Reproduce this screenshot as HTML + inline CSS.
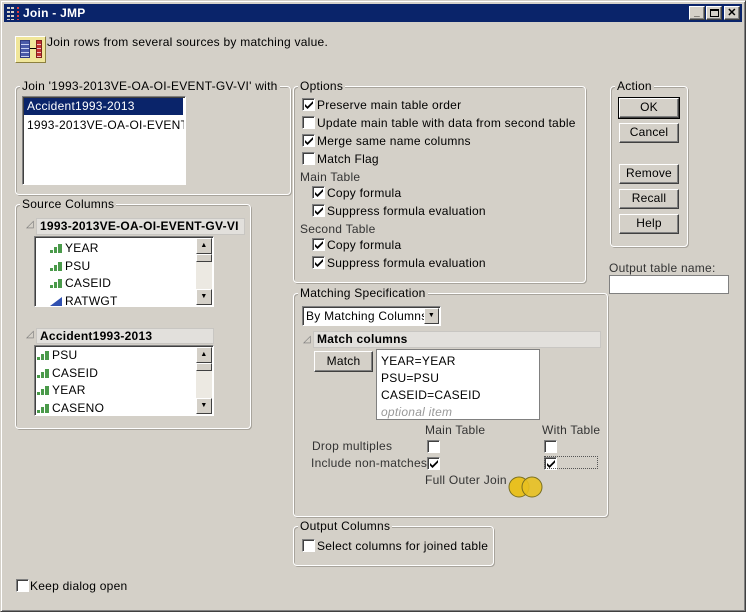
<!DOCTYPE html>
<html><head><meta charset="utf-8"><style>
*{margin:0;padding:0;box-sizing:border-box}
body{width:746px;height:612px;background:#d4d0c8;font-family:"Liberation Sans",Tahoma,sans-serif;font-size:12px;letter-spacing:0.25px;color:#000;position:relative;overflow:hidden}
.a{position:absolute;white-space:nowrap}
.grp{position:absolute;border:1px solid #fff;box-shadow:inset 1px 1px 0 #a8a49c,1px 1px 0 #a8a49c;border-radius:4px}
.lg{position:absolute;top:-8px;left:4px;background:#d4d0c8;padding:0 2px;line-height:14px}
.cb{position:absolute;width:13px;height:13px;background:#fff;border:1px solid;border-color:#808080 #fff #fff #808080;box-shadow:inset 1px 1px 0 #404040}
.cb svg{position:absolute;left:1px;top:1px}
.btn{position:absolute;background:#d4d0c8;border:1px solid;border-color:#fff #404040 #404040 #fff;box-shadow:inset -1px -1px 0 #808080;text-align:center;line-height:17px;letter-spacing:0.2px}
.lb{position:absolute;background:#fff;border:1px solid;border-color:#808080 #fff #fff #808080;box-shadow:inset 1px 1px 0 #404040}
.hd{position:absolute;background:#e2e0dc;border:1px solid #c8c6c2;font-weight:bold;line-height:15px;padding-left:3px}
.ico{display:inline-block;width:12px;height:9px;margin-right:3px;vertical-align:-1px}
.sb{position:absolute;width:16px;background:#ece9e2}
.sbb{position:absolute;left:0;width:16px;height:16px;background:#d4d0c8;border:1px solid;border-color:#fff #404040 #404040 #fff;font-size:7px;text-align:center;line-height:14px}
</style></head><body>
<div class="a" style="left:0;top:0;width:746px;height:612px;border:1px solid;border-color:#d4d0c8 #404040 #404040 #d4d0c8;box-shadow:inset 1px 1px 0 #fff,inset -1px -1px 0 #808080"></div>
<div class="a" style="left:4px;top:4px;width:738px;height:18px;background:#0a246a"></div>
<div class="a" style="left:7px;top:7px;width:3px;height:13px;background:repeating-linear-gradient(#d4d0c8 0 2px,transparent 2px 4px)"></div>
<div class="a" style="left:11px;top:7px;width:3px;height:13px;background:repeating-linear-gradient(#d4d0c8 0 2px,transparent 2px 4px)"></div>
<div class="a" style="left:17px;top:7px;width:2px;height:13px;background:repeating-linear-gradient(#e04040 0 2px,transparent 2px 4px)"></div>
<div class="a" style="left:23px;top:5px;color:#fff;font-weight:bold;font-size:12px;line-height:16px">Join - JMP</div>
<div class="btn" style="left:689px;top:6px;width:16px;height:14px;line-height:12px;font-size:10px;font-weight:bold">_</div>
<div class="btn" style="left:706px;top:6px;width:16px;height:14px"><div style="position:absolute;left:3px;top:2px;width:9px;height:8px;border:1px solid #000;border-top-width:2px"></div></div>
<div class="btn" style="left:724px;top:6px;width:16px;height:14px;line-height:12px;font-weight:bold;font-size:11px">✕</div>

<div class="a" style="left:15px;top:36px;width:31px;height:27px;background:#f0e69a;border:1px solid;border-color:#fff #8c8040 #8c8040 #fff"></div>
<div class="a" style="left:20px;top:40px;width:10px;height:18px;background:repeating-linear-gradient(#4a5aa8 0 3px,#c8d0f0 3px 4px);border:1px solid #303a80"></div>
<div class="a" style="left:36px;top:40px;width:6px;height:18px;background:repeating-linear-gradient(#c03030 0 3px,#f0c0c0 3px 4px);border:1px solid #802020"></div>
<div class="a" style="left:30px;top:48px;width:6px;height:1px;background:#000"></div>
<div class="a" style="left:47px;top:35px">Join rows from several sources by matching value.</div>

<div class="grp" style="left:15px;top:86px;width:276px;height:109px"><span class="lg">Join '1993-2013VE-OA-OI-EVENT-GV-VI' with</span></div>
<div class="lb" style="left:22px;top:96px;width:164px;height:89px"></div>
<div class="a" style="left:24px;top:98px;width:159px;height:17px;background:#0a246a;color:#fff;line-height:17px;padding-left:3px">Accident1993-2013</div>
<div class="a" style="left:27px;top:118px;width:157px;overflow:hidden">1993-2013VE-OA-OI-EVENT-</div>

<div class="grp" style="left:15px;top:204px;width:236px;height:225px"><span class="lg">Source Columns</span></div>
<div class="a" style="left:26px;top:219px;color:#777;font-size:10px">◿</div>
<div class="hd" style="left:36px;top:218px;width:209px;height:17px">1993-2013VE-OA-OI-EVENT-GV-VI</div>
<div class="lb" style="left:34px;top:236px;width:180px;height:71px"></div>
<div class="a" style="left:50px;top:240px;line-height:17.5px">
<div><svg class="ico" viewBox="0 0 12 9"><rect x="0" y="6" width="3" height="3" fill="#4a9a4a"/><rect x="4" y="3" width="3" height="6" fill="#4a9a4a"/><rect x="8" y="0" width="4" height="9" fill="#4a9a4a"/></svg>YEAR</div>
<div><svg class="ico" viewBox="0 0 12 9"><rect x="0" y="6" width="3" height="3" fill="#4a9a4a"/><rect x="4" y="3" width="3" height="6" fill="#4a9a4a"/><rect x="8" y="0" width="4" height="9" fill="#4a9a4a"/></svg>PSU</div>
<div><svg class="ico" viewBox="0 0 12 9"><rect x="0" y="6" width="3" height="3" fill="#4a9a4a"/><rect x="4" y="3" width="3" height="6" fill="#4a9a4a"/><rect x="8" y="0" width="4" height="9" fill="#4a9a4a"/></svg>CASEID</div>
<div><svg class="ico" viewBox="0 0 12 9"><polygon points="0,9 12,0 12,9" fill="#3050b0"/></svg>RATWGT</div>
</div>
<div class="sb" style="left:196px;top:238px;height:67px"><div class="sbb" style="top:0">▲</div><div class="sbb" style="top:16px;height:8px"></div><div class="sbb" style="top:51px">▼</div></div>

<div class="a" style="left:26px;top:329px;color:#777;font-size:10px">◿</div>
<div class="hd" style="left:36px;top:328px;width:178px;height:16px">Accident1993-2013</div>
<div class="lb" style="left:34px;top:345px;width:180px;height:71px"></div>
<div class="a" style="left:37px;top:347px;line-height:17.5px">
<div><svg class="ico" viewBox="0 0 12 9"><rect x="0" y="6" width="3" height="3" fill="#4a9a4a"/><rect x="4" y="3" width="3" height="6" fill="#4a9a4a"/><rect x="8" y="0" width="4" height="9" fill="#4a9a4a"/></svg>PSU</div>
<div><svg class="ico" viewBox="0 0 12 9"><rect x="0" y="6" width="3" height="3" fill="#4a9a4a"/><rect x="4" y="3" width="3" height="6" fill="#4a9a4a"/><rect x="8" y="0" width="4" height="9" fill="#4a9a4a"/></svg>CASEID</div>
<div><svg class="ico" viewBox="0 0 12 9"><rect x="0" y="6" width="3" height="3" fill="#4a9a4a"/><rect x="4" y="3" width="3" height="6" fill="#4a9a4a"/><rect x="8" y="0" width="4" height="9" fill="#4a9a4a"/></svg>YEAR</div>
<div><svg class="ico" viewBox="0 0 12 9"><rect x="0" y="6" width="3" height="3" fill="#4a9a4a"/><rect x="4" y="3" width="3" height="6" fill="#4a9a4a"/><rect x="8" y="0" width="4" height="9" fill="#4a9a4a"/></svg>CASENO</div>
</div>
<div class="sb" style="left:196px;top:347px;height:67px"><div class="sbb" style="top:0">▲</div><div class="sbb" style="top:16px;height:8px"></div><div class="sbb" style="top:51px">▼</div></div>

<div class="grp" style="left:293px;top:86px;width:293px;height:197px"><span class="lg">Options</span></div>
<div class="cb" style="left:302px;top:98px"><svg width="10" height="10"><path d="M1 4l2.5 2.5L9 1v2.5L3.5 9 1 6.5z" fill="#000"/></svg></div><div class="a" style="left:317px;top:98px">Preserve main table order</div>
<div class="cb" style="left:302px;top:116px"></div><div class="a" style="left:317px;top:116px">Update main table with data from second table</div>
<div class="cb" style="left:302px;top:134px"><svg width="10" height="10"><path d="M1 4l2.5 2.5L9 1v2.5L3.5 9 1 6.5z" fill="#000"/></svg></div><div class="a" style="left:317px;top:134px">Merge same name columns</div>
<div class="cb" style="left:302px;top:152px"></div><div class="a" style="left:317px;top:152px">Match Flag</div>
<div class="a" style="left:300px;top:170px;color:#333">Main Table</div>
<div class="cb" style="left:312px;top:186px"><svg width="10" height="10"><path d="M1 4l2.5 2.5L9 1v2.5L3.5 9 1 6.5z" fill="#000"/></svg></div><div class="a" style="left:327px;top:186px">Copy formula</div>
<div class="cb" style="left:312px;top:204px"><svg width="10" height="10"><path d="M1 4l2.5 2.5L9 1v2.5L3.5 9 1 6.5z" fill="#000"/></svg></div><div class="a" style="left:327px;top:204px">Suppress formula evaluation</div>
<div class="a" style="left:300px;top:222px;color:#333">Second Table</div>
<div class="cb" style="left:312px;top:238px"><svg width="10" height="10"><path d="M1 4l2.5 2.5L9 1v2.5L3.5 9 1 6.5z" fill="#000"/></svg></div><div class="a" style="left:327px;top:238px">Copy formula</div>
<div class="cb" style="left:312px;top:256px"><svg width="10" height="10"><path d="M1 4l2.5 2.5L9 1v2.5L3.5 9 1 6.5z" fill="#000"/></svg></div><div class="a" style="left:327px;top:256px">Suppress formula evaluation</div>

<div class="grp" style="left:610px;top:86px;width:78px;height:161px"><span class="lg">Action</span></div>
<div class="btn" style="left:619px;top:98px;width:60px;height:20px;outline:1px solid #000">OK</div>
<div class="btn" style="left:619px;top:123px;width:60px;height:20px">Cancel</div>
<div class="btn" style="left:619px;top:164px;width:60px;height:20px">Remove</div>
<div class="btn" style="left:619px;top:189px;width:60px;height:20px">Recall</div>
<div class="btn" style="left:619px;top:214px;width:60px;height:20px">Help</div>
<div class="a" style="left:609px;top:261px;color:#333">Output table name:</div>
<div class="lb" style="left:609px;top:275px;width:120px;height:19px;box-shadow:none;border-color:#808080"></div>

<div class="grp" style="left:293px;top:293px;width:315px;height:224px"><span class="lg">Matching Specification</span></div>
<div class="lb" style="left:302px;top:306px;width:139px;height:20px;box-shadow:inset 1px 1px 0 #404040"></div>
<div class="a" style="left:306px;top:309px">By Matching Columns</div>
<div class="sbb" style="left:424px;top:308px;width:15px;font-size:7px">▼</div>
<div class="a" style="left:303px;top:334px;color:#777;font-size:10px">◿</div>
<div class="hd" style="left:313px;top:331px;width:288px;height:17px">Match columns</div>
<div class="btn" style="left:314px;top:351px;width:59px;height:21px;line-height:19px">Match</div>
<div class="lb" style="left:376px;top:349px;width:164px;height:71px;box-shadow:none;border:1px solid #808080"></div>
<div class="a" style="left:381px;top:353px;line-height:17px">YEAR=YEAR<br>PSU=PSU<br>CASEID=CASEID<br><i style="color:#999">optional item</i></div>
<div class="a" style="left:425px;top:423px;color:#333">Main Table</div>
<div class="a" style="left:542px;top:423px;color:#333">With Table</div>
<div class="a" style="left:312px;top:439px;color:#333">Drop multiples</div>
<div class="a" style="left:311px;top:456px;color:#333">Include non-matches</div>
<div class="cb" style="left:427px;top:440px"></div>
<div class="cb" style="left:544px;top:440px"></div>
<div class="cb" style="left:427px;top:457px"><svg width="10" height="10"><path d="M1 4l2.5 2.5L9 1v2.5L3.5 9 1 6.5z" fill="#000"/></svg></div>
<div class="cb" style="left:544px;top:457px"><svg width="10" height="10"><path d="M1 4l2.5 2.5L9 1v2.5L3.5 9 1 6.5z" fill="#000"/></svg></div>
<div class="a" style="left:544px;top:456px;width:54px;height:13px;border:1px dotted #555"></div>
<div class="a" style="left:425px;top:473px;color:#333">Full Outer Join</div>
<svg class="a" style="left:508px;top:476px" width="36" height="22"><circle cx="11" cy="11" r="10" fill="#e8c020" stroke="#7a7020"/><circle cx="24" cy="11" r="10" fill="#e8c020" fill-opacity=".9" stroke="#7a7020"/></svg>

<div class="grp" style="left:293px;top:526px;width:201px;height:40px"><span class="lg">Output Columns</span></div>
<div class="cb" style="left:302px;top:539px"></div><div class="a" style="left:317px;top:539px">Select columns for joined table</div>

<div class="cb" style="left:16px;top:579px"></div><div class="a" style="left:30px;top:579px">Keep dialog open</div>
</body></html>
